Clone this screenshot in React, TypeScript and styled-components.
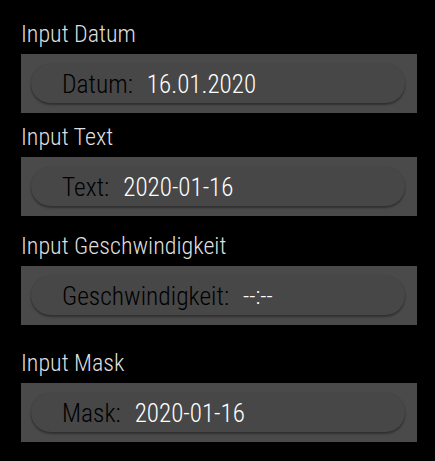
import React from 'react';
import styled, { createGlobalStyle } from 'styled-components';

const GlobalStyle = createGlobalStyle`
  html, body {
    margin: 0;
    padding: 0;
    background: #000;
  }
  body {
    font-family: 'Roboto Condensed', Roboto, 'Liberation Sans', sans-serif;
  }
`;

const Container = styled.main`
  display: flex;
  flex-direction: column;
  width: 435px;
  min-height: 461px;
  background-color: #000;
  padding: 0 18px 0 21px;
  box-sizing: border-box;
`;

const Section = styled.section<{ $top: number }>`
  display: flex;
  flex-direction: column;
  margin-top: ${(p) => p.$top}px;
`;

const Title = styled.h2`
  margin: 0 0 7px;
  font-size: 24px;
  line-height: 26px;
  font-weight: 300;
  color: #dedede;
`;

const Card = styled.div`
  display: flex;
  align-items: center;
  height: 59px;
  padding: 0 12px 0 10px;
  background-color: #4a4a4a;
  box-shadow: 0 2px 6px rgba(0, 0, 0, 0.6);
`;

const Pill = styled.div`
  display: flex;
  align-items: center;
  flex: 1;
  height: 39px;
  padding: 1px 0 0 31px;
  box-sizing: border-box;
  border-radius: 20px;
  background-color: #474747;
  box-shadow: 0 2px 2px rgba(0, 0, 0, 0.32), 0 0 2px rgba(0, 0, 0, 0.14);
`;

const FieldLabel = styled.span`
  font-size: 25.5px;
  font-weight: 300;
  color: #000;
  margin-right: 14px;
`;

const FieldValue = styled.span<{ $small?: boolean }>`
  font-size: ${(p) => (p.$small ? '24px' : '25px')};
  font-weight: 300;
  color: #fff;
`;

const fields = [
  { title: 'Input Datum', label: 'Datum:', value: '16.01.2020', top: 21 },
  { title: 'Input Text', label: 'Text:', value: '2020-01-16', top: 11 },
  { title: 'Input Geschwindigkeit', label: 'Geschwindigkeit:', value: '--:--', top: 17, small: true },
  { title: 'Input Mask', label: 'Mask:', value: '2020-01-16', top: 25 },
];

export default function App() {
  return (
    <>
      <GlobalStyle />
      <Container>
        {fields.map((f) => (
          <Section key={f.title} $top={f.top}>
            <Title>{f.title}</Title>
            <Card>
              <Pill>
                <FieldLabel>{f.label}</FieldLabel>
                <FieldValue $small={f.small}>{f.value}</FieldValue>
              </Pill>
            </Card>
          </Section>
        ))}
      </Container>
    </>
  );
}
